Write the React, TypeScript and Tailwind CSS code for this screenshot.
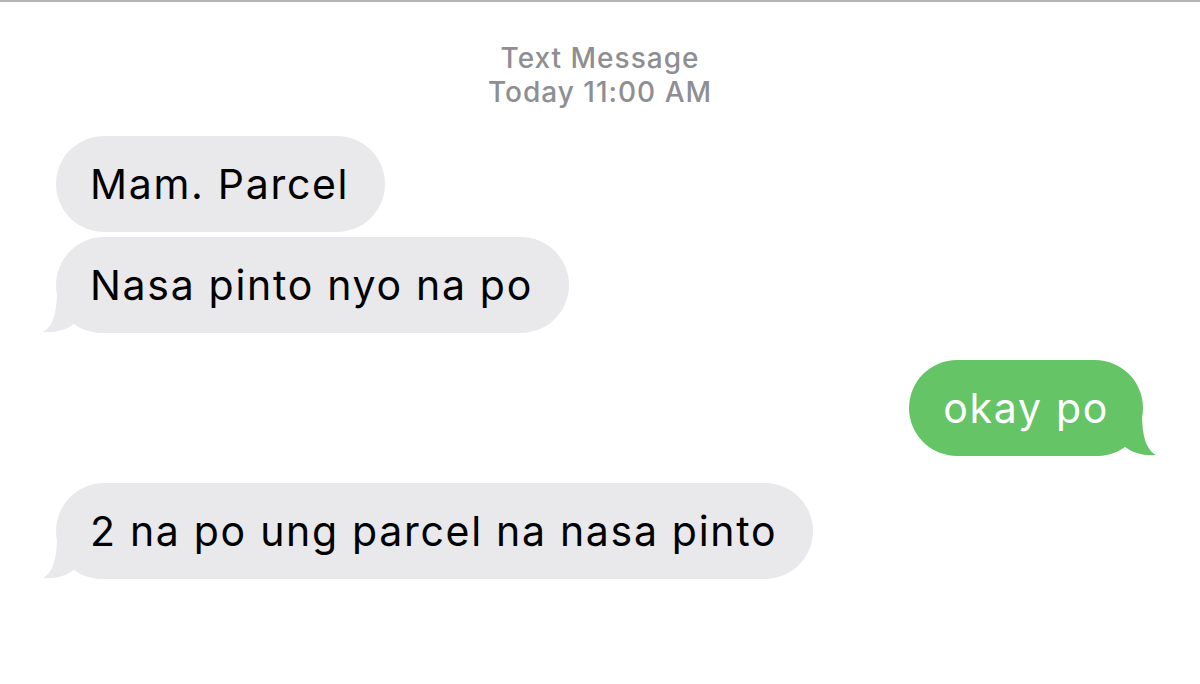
import React from "react";

function Tail({ color, side }: { color: string; side: "left" | "right" }) {
  return (
    <svg
      width="64"
      height="48"
      viewBox="0 0 64 48"
      className={
        side === "left"
          ? "absolute bottom-0 left-[-16px]"
          : "absolute bottom-0 right-[-16px] -scale-x-100"
      }
    >
      <path
        d="M17,5 C17,30 12,42 3,47 C15,48 26,45 34,39 C42,45 52,48 64,48 L64,5 Z"
        fill={color}
      />
    </svg>
  );
}

function Bubble({
  text,
  tail,
  sent,
}: {
  text: string;
  tail?: boolean;
  sent?: boolean;
}) {
  return (
    <div
      className={
        sent
          ? "relative self-end mr-[57px] rounded-[48px] bg-[#65c466] text-white h-[96px] pl-[34px] pr-[34px] flex items-center"
          : "relative self-start ml-[56px] rounded-[48px] bg-[#e9e9eb] text-black h-[96px] pl-[34px] pr-[36px] flex items-center"
      }
    >
      {tail && <Tail color={sent ? "#65c466" : "#e9e9eb"} side={sent ? "right" : "left"} />}
      <span className="relative text-[41px] leading-[48px] tracking-[1.7px]">{text}</span>
    </div>
  );
}

export default function App() {
  return (
    <div
      className="w-[1200px] h-[684px] bg-white overflow-hidden flex flex-col"
      style={{ fontFamily: "Inter, 'Liberation Sans', sans-serif" }}
    >
      <div className="h-[2px] bg-[#b4b4b4] shrink-0" />
      <div className="pt-[39px] flex flex-col items-center text-[#8e8e93] text-[28px] leading-[34px] font-medium tracking-[1px]">
        <div>Text Message</div>
        <div>Today 11:00 AM</div>
      </div>
      <div className="mt-[27px] flex flex-col">
        <Bubble text="Mam. Parcel" />
        <div className="h-[5px]" />
        <Bubble text="Nasa pinto nyo na po" tail />
        <div className="h-[27px]" />
        <Bubble text="okay po" tail sent />
        <div className="h-[27px]" />
        <Bubble text="2 na po ung parcel na nasa pinto" tail />
      </div>
    </div>
  );
}
